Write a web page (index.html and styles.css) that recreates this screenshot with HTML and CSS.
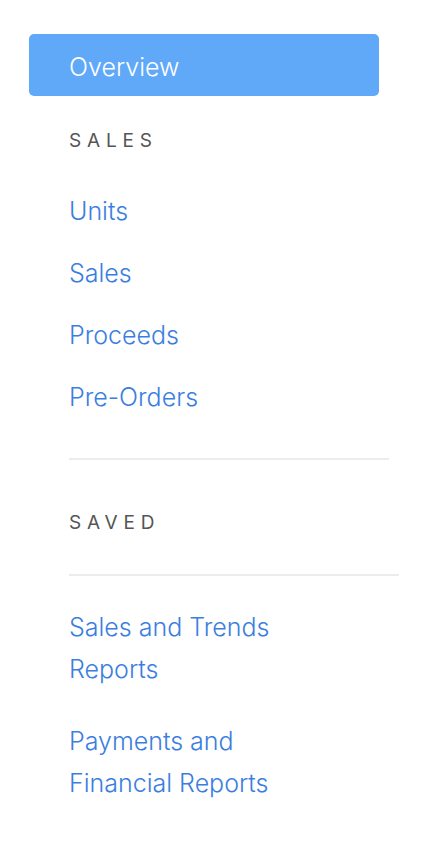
FILE: index.html
```html
<!DOCTYPE html>
<html>
<head>
<meta charset="utf-8">
<link rel="stylesheet" href="styles.css">
</head>
<body>
<nav class="sidebar">
  <a class="overview">Overview</a>
  <div class="heading first">SALES</div>
  <ul class="list">
    <li><a>Units</a></li>
    <li><a>Sales</a></li>
    <li><a>Proceeds</a></li>
    <li><a>Pre-Orders</a></li>
  </ul>
  <div class="divider short"></div>
  <div class="heading saved">SAVED</div>
  <div class="divider long"></div>
  <ul class="reports">
    <li><a>Sales and Trends<br>Reports</a></li>
    <li><a>Payments and<br>Financial Reports</a></li>
  </ul>
</nav>
</body>
</html>
```
FILE: styles.css
```css
* { box-sizing: border-box; }
html, body { margin: 0; padding: 0; background: #fff; }
body { font-family: Inter, "Noto Sans", sans-serif; }
.sidebar { padding-top: 34px; display: flex; flex-direction: column; }
.overview {
  display: block;
  margin-left: 29px;
  width: 350px;
  height: 62px;
  line-height: 62px;
  padding: 2px 0 0 40px;
  background: #60a8f8;
  border-radius: 5px;
  color: #fff;
  font-size: 25px;
  font-weight: 300;
}
.heading {
  margin-left: 69px;
  height: 20px;
  line-height: 20px;
  font-size: 19px;
  letter-spacing: 5.8px;
  color: #555;
}
.heading.first { margin-top: 35px; margin-bottom: 29px; }
.heading.saved { margin-top: 53px; }
.list, .reports { list-style: none; margin: 0; padding: 0 0 0 69px; }
.list li { height: 62px; line-height: 62px; font-size: 25px; font-weight: 300; }
.list a, .reports a { color: #3a7ee0; }
.divider { height: 2px; background: #ececec; margin-left: 69px; }
.divider.short { width: 320px; margin-top: 30px; }
.divider.long { width: 330px; margin-top: 41px; }
.reports { margin-top: 30px; }
.reports li { line-height: 42px; font-size: 25px; font-weight: 300; margin-bottom: 30px; }
```
